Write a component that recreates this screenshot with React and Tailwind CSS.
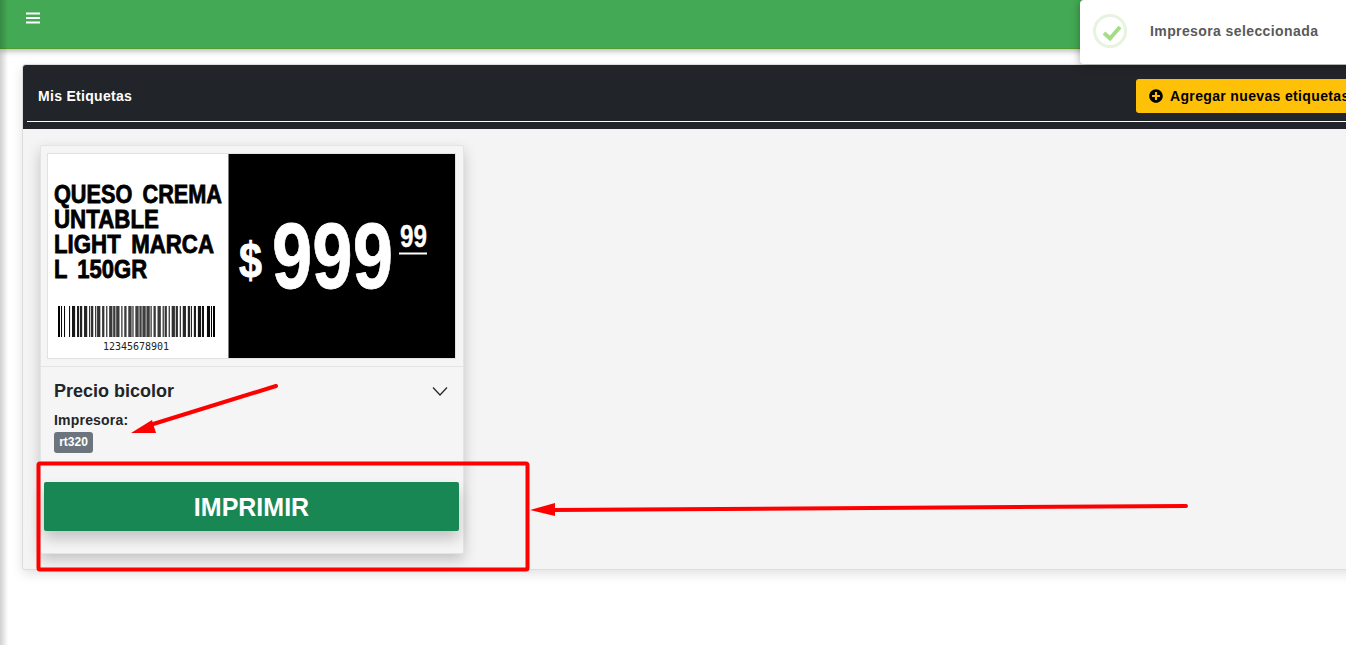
import { FaPlusCircle } from "react-icons/fa";

// Code128 B patterns for "12345678901", start, check and stop included
const barcodeBits = [
  "11010010000",
  "10011100110",
  "11001110010",
  "11001011100",
  "11001001110",
  "11011100100",
  "11001110100",
  "11101101110",
  "11101001100",
  "11100101100",
  "10011101100",
  "10011100110",
  "10011001110",
  "1100011101011",
].join("");

function Barcode() {
  return (
    <svg x="58" y="306" width="157" height="31" viewBox="0 0 156 31" preserveAspectRatio="none">
      {barcodeBits.split("").map((bit, i) =>
        bit === "1" ? <rect key={i} x={i} y="0" width="1" height="31" fill="#000" /> : null
      )}
    </svg>
  );
}

// The label is a picture in the page, coordinates are relative to the card image
function LabelPicture() {
  const boldText = { fontFamily: "'Liberation Sans', sans-serif", fontWeight: 700 };
  return (
    <svg className="block w-[407px] h-[204px]" viewBox="48 154 407 204">
      <rect x="48" y="154" width="407" height="204" fill="#fff" />
      <rect x="228.5" y="154" width="226.5" height="204" fill="#000" />
      <g style={{ ...boldText, wordSpacing: "5px" }} fill="#000" stroke="#000" strokeWidth="0.8" fontSize="26">
        <text x="54" y="203" textLength="168" lengthAdjust="spacingAndGlyphs">QUESO CREMA</text>
        <text x="54" y="228" textLength="105" lengthAdjust="spacingAndGlyphs">UNTABLE</text>
        <text x="54" y="253" textLength="160" lengthAdjust="spacingAndGlyphs">LIGHT MARCA</text>
        <text x="54" y="278" textLength="93" lengthAdjust="spacingAndGlyphs">L 150GR</text>
      </g>
      <Barcode />
      <text x="103" y="350" fontSize="10" fill="#222" textLength="66" style={{ fontFamily: "'DejaVu Sans Mono', monospace" }}>12345678901</text>
      <g style={boldText} fill="#fff" stroke="#fff" strokeWidth="0.8">
        <text x="239" y="277" fontSize="50" textLength="23" lengthAdjust="spacingAndGlyphs">$</text>
        <text x="272" y="288" fontSize="92" textLength="121" lengthAdjust="spacingAndGlyphs">999</text>
        <text x="400" y="247" fontSize="32" strokeWidth="0.3" textLength="27" lengthAdjust="spacingAndGlyphs">99</text>
      </g>
      <rect x="399" y="252.5" width="28" height="2" fill="#fff" />
    </svg>
  );
}

function Annotations() {
  return (
    <svg className="absolute left-0 top-0 pointer-events-none" width="1346" height="645">
      <rect x="38.5" y="463.5" width="489" height="106" rx="1.5" fill="none" stroke="#ff0000" strokeWidth="4" />
      <line x1="276" y1="386" x2="150" y2="425" stroke="#ff0000" strokeWidth="4" strokeLinecap="round" />
      <polygon points="131,433 152,420 156,433" fill="#ff0000" />
      <line x1="1186" y1="506" x2="550" y2="510" stroke="#ff0000" strokeWidth="4" strokeLinecap="round" />
      <polygon points="530,510 555,503 555,516" fill="#ff0000" />
    </svg>
  );
}

export default function App() {
  return (
    <div className="relative h-[645px] w-[1346px] overflow-hidden bg-white font-['Liberation_Sans',sans-serif] text-[#212529]">
      {/* Top bar */}
      <div className="h-[49px] border-b border-[#4f9d2a] bg-[#43a954] pl-[26px] pt-3 shadow-[0_2px_6px_rgba(0,0,0,0.3)]">
        <svg width="14" height="12" viewBox="0 0 14 12" className="block">
          <rect x="0" y="0.5" width="14" height="2" fill="#fff" />
          <rect x="0" y="5" width="14" height="2" fill="#fff" />
          <rect x="0" y="9.5" width="14" height="2" fill="#fff" />
        </svg>
      </div>

      {/* Panel, runs past the right edge of the window */}
      <div className="ml-[22px] mt-[15px] h-[506px] w-[1400px] rounded-[3px] border border-[#dcdcdc] bg-[#f4f4f4] shadow-[0_4px_12px_rgba(0,0,0,0.12)]">
        <div className="h-[64px] rounded-t-[3px] bg-[#212529] pl-[4px]">
          <div className="flex h-[57px] items-center border-b border-white pl-[11px] pt-[2px]">
            <span className="mt-[4px] text-sm font-bold tracking-[0.3px] text-white">Mis Etiquetas</span>
            <button className="ml-auto mr-[25px] mt-[4px] flex h-[34px] w-[260px] items-center gap-[7px] rounded-[3px] bg-[#ffc107] pl-[13px] text-sm font-bold tracking-[0.35px] text-black">
              <FaPlusCircle className="h-[14px] w-[14px]" />
              Agregar nuevas etiquetas
            </button>
          </div>
        </div>

        {/* Card */}
        <div className="ml-[17px] mt-4 h-[409px] w-[424px] rounded-[2px] border border-[#e2e5e8] bg-[#f5f5f5] shadow-[0_6px_14px_rgba(0,0,0,0.2)]">
          <div className="border-b border-[#e4e4e4] px-[6px] pt-[7px] pb-[7px]">
            <div className="w-[409px] border border-[#e2e2e2]">
              <LabelPicture />
            </div>
          </div>
          <div className="flex items-center justify-between pl-[13px] pr-[15px] pt-[13px]">
            <h5 className="text-lg leading-[22px] font-bold">Precio bicolor</h5>
            <svg width="16" height="11" viewBox="0 0 16 11">
              <polyline points="1,1.5 8,9 15,1.5" fill="none" stroke="#212529" strokeWidth="1.2" />
            </svg>
          </div>
          <div className="pl-[13px] pt-[8px] text-sm leading-[20px] font-bold tracking-[0.2px]">Impresora:</div>
          <span className="ml-[13px] mt-[2px] block h-[21px] w-[39px] rounded-[3px] bg-[#6c757d] text-center text-xs leading-[20px] font-bold text-white">rt320</span>
          <button className="ml-[3px] mt-[29px] block h-[49px] w-[415px] rounded-[2px] bg-[#198754] pt-[2px] text-center text-[25px] font-bold text-white shadow-[0_8px_14px_rgba(0,0,0,0.2)]">
            IMPRIMIR
          </button>
        </div>
      </div>

      {/* Shadow of the hidden side menu */}
      <div className="absolute left-0 top-0 h-full w-2 bg-gradient-to-r from-[#00000030] to-transparent" />

      {/* Toast */}
      <div className="absolute left-[1080px] top-0 flex h-[64px] w-[280px] items-center rounded-l-[4px] bg-white pb-[2px] pl-[13px] shadow-[0_1px_8px_rgba(0,0,0,0.35)]">
        <svg width="34" height="34" viewBox="0 0 34 34" className="shrink-0">
          <circle cx="17" cy="17" r="15.5" fill="none" stroke="#e6f3de" strokeWidth="3" />
          <polyline points="11,19 17,24.5 27,13" fill="none" stroke="#a5dc86" strokeWidth="4" />
        </svg>
        <span className="ml-[23px] text-sm font-bold tracking-[0.4px] text-[#595959]">Impresora seleccionada</span>
      </div>

      <Annotations />
    </div>
  );
}
